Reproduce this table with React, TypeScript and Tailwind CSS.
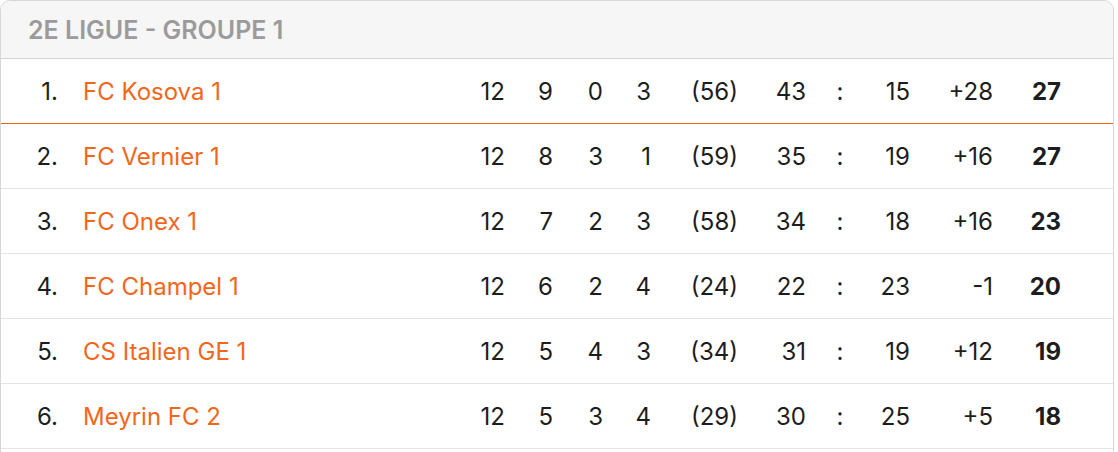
const rows = [
  { rank: 1, team: 'FC Kosova 1', j: 12, g: 9, n: 0, p: 3, fp: '(56)', bp: 43, bc: 15, diff: '+28', pts: 27 },
  { rank: 2, team: 'FC Vernier 1', j: 12, g: 8, n: 3, p: 1, fp: '(59)', bp: 35, bc: 19, diff: '+16', pts: 27 },
  { rank: 3, team: 'FC Onex 1', j: 12, g: 7, n: 2, p: 3, fp: '(58)', bp: 34, bc: 18, diff: '+16', pts: 23 },
  { rank: 4, team: 'FC Champel 1', j: 12, g: 6, n: 2, p: 4, fp: '(24)', bp: 22, bc: 23, diff: '-1', pts: 20 },
  { rank: 5, team: 'CS Italien GE 1', j: 12, g: 5, n: 4, p: 3, fp: '(34)', bp: 31, bc: 19, diff: '+12', pts: 19 },
  { rank: 6, team: 'Meyrin FC 2', j: 12, g: 5, n: 3, p: 4, fp: '(29)', bp: 30, bc: 25, diff: '+5', pts: 18 },
];

export default function App() {
  return (
    <div className="w-[1118px] h-[452px] bg-white overflow-hidden font-['Inter','Liberation_Sans',sans-serif]">
      <div className="w-[1114px] h-[470px] border border-[#d6d6d6] rounded-t-[10px] overflow-hidden">
        {/* Header */}
        <div className="h-[58px] bg-[#f6f6f6] border-b border-[#d4d4d4] flex items-center pl-[27px] pt-[2px]">
          <span className="text-[25px] font-semibold text-[#9b9b9b]">2E LIGUE - GROUPE 1</span>
        </div>

        {/* Rows */}
        {rows.map((r, i) => (
          <div
            key={r.rank}
            className={`h-[65px] flex items-center text-[24px] text-[#1d1d20] pt-[1px] border-b ${
              i === 0 ? 'border-[#ec6513]' : 'border-[#e4e4e6]'
            }`}
          >
            <div className="w-[57px] text-right">{r.rank}.</div>
            <div className="w-[397px] pl-[25px] text-[#f2661b]">{r.team}</div>
            <div className="w-[50px] text-right">{r.j}</div>
            <div className="w-[48px] text-right">{r.g}</div>
            <div className="w-[50px] text-right">{r.n}</div>
            <div className="w-[48px] text-right">{r.p}</div>
            <div className="w-[87px] text-right">{r.fp}</div>
            <div className="w-[68px] text-right">{r.bp}</div>
            <div className="w-[68px] text-center">:</div>
            <div className="w-[36px] text-right">{r.bc}</div>
            <div className="w-[83px] text-right">{r.diff}</div>
            <div className="w-[68px] text-right font-bold">{r.pts}</div>
          </div>
        ))}
      </div>
    </div>
  );
}
